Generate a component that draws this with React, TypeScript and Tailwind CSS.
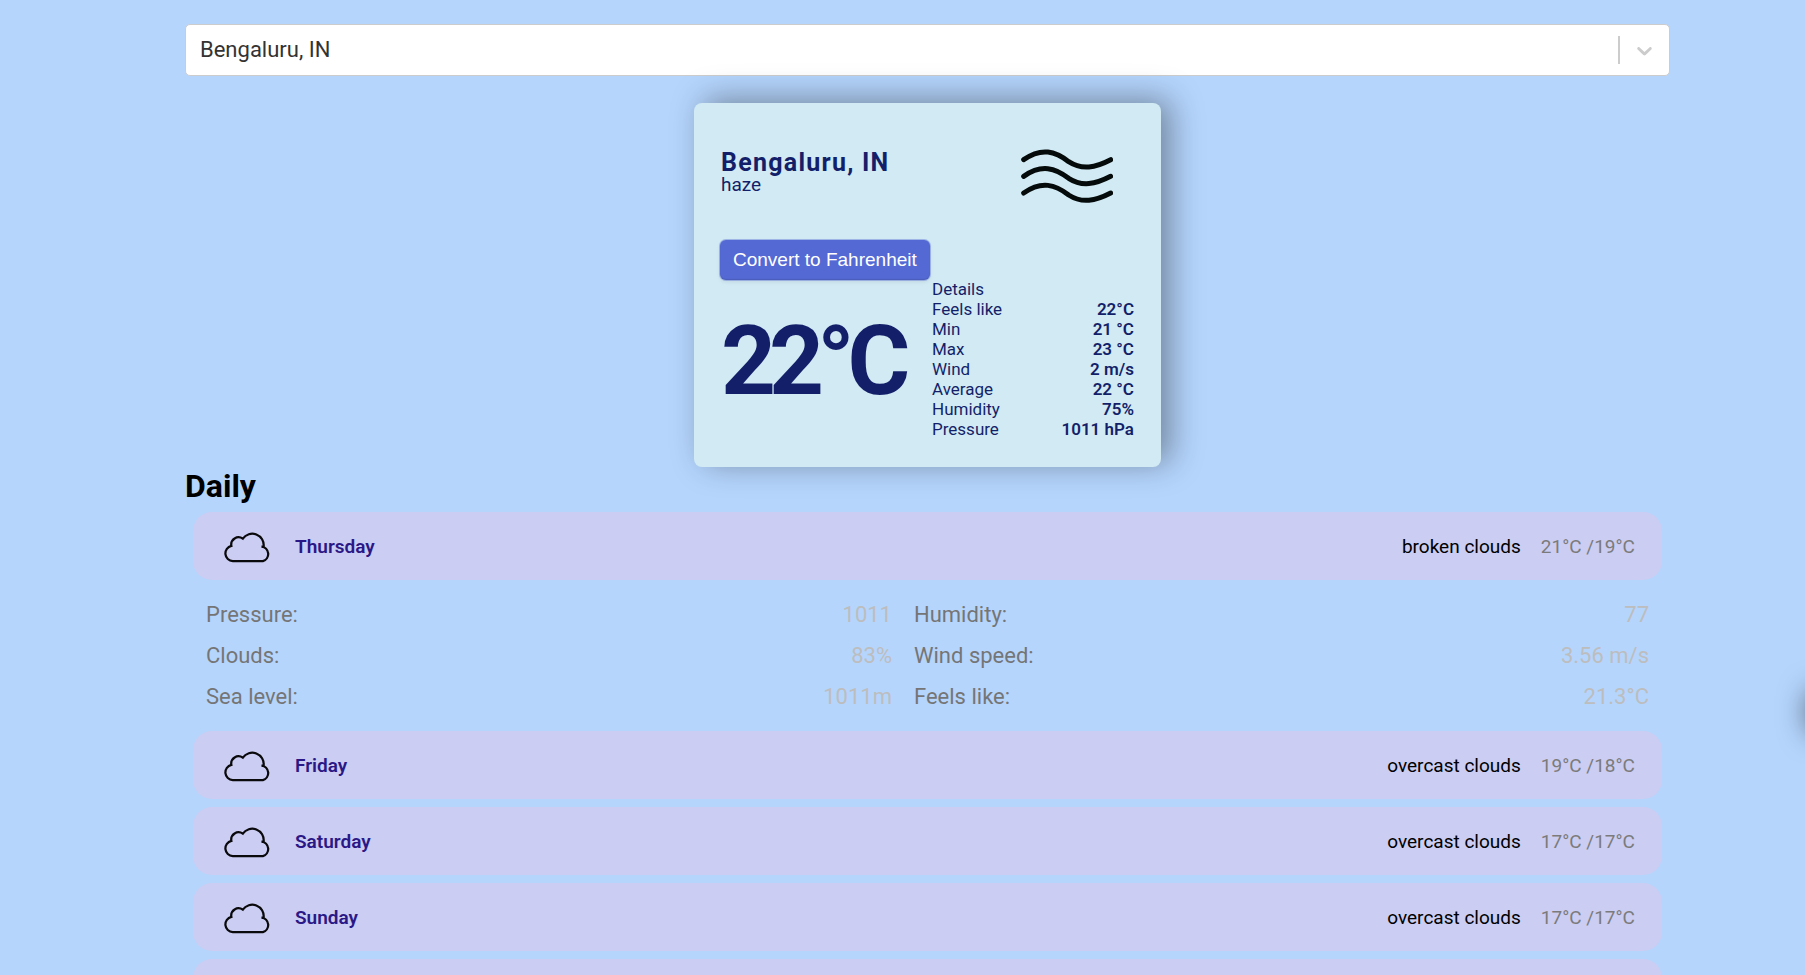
import { useState } from "react";

const DETAILS = [
  ["Feels like", "22°C"],
  ["Min", "21 °C"],
  ["Max", "23 °C"],
  ["Wind", "2 m/s"],
  ["Average", "22 °C"],
  ["Humidity", "75%"],
  ["Pressure", "1011 hPa"],
];

const DAYS = [
  { day: "Thursday", sky: "broken clouds", temp: "21°C /19°C" },
  { day: "Friday", sky: "overcast clouds", temp: "19°C /18°C" },
  { day: "Saturday", sky: "overcast clouds", temp: "17°C /17°C" },
  { day: "Sunday", sky: "overcast clouds", temp: "17°C /17°C" },
  { day: "Monday", sky: "overcast clouds", temp: "17°C /17°C" },
];

const DAY_DETAILS = [
  ["Pressure:", "1011"],
  ["Humidity:", "77"],
  ["Clouds:", "83%"],
  ["Wind speed:", "3.56 m/s"],
  ["Sea level:", "1011m"],
  ["Feels like:", "21.3°C"],
];

function CloudIcon() {
  return (
    <svg className="h-9 w-[50px] shrink-0" viewBox="160 240 144 104" fill="none" stroke="#0a0a0c" strokeWidth="6.5" aria-hidden="true">
      <path d="M188 333H275A21.5 21.5 0 0 0 271 291H277A33 33 0 0 0 217 268A21 21 0 0 0 184 289A22.3 22.3 0 0 0 188 333Z" />
    </svg>
  );
}

function HazeIcon() {
  return (
    <svg className="h-[54px] w-[92px]" viewBox="302 207 276 162" fill="none" stroke="#050b0b" strokeWidth="15" strokeLinecap="round" aria-hidden="true">
      <path d="M310 239C364 201 405 214 445 245C485 271 525 263 571 239" />
      <path d="M310 289C364 251 405 264 445 295C485 321 525 313 571 289" />
      <path d="M310 339C364 301 405 314 445 345C485 371 525 363 571 339" />
    </svg>
  );
}

export default function App() {
  const [open, setOpen] = useState(0);
  return (
    <div className="relative min-h-screen overflow-x-clip bg-[#b5d5fd] pt-6 pr-[135px] pl-[185px] font-[Roboto,sans-serif] text-black">
      <div className="flex h-[52px] items-center rounded-[5px] border border-[#cccccc] bg-white">
        <input
          aria-label="Search for city"
          defaultValue="Bengaluru, IN"
          className="h-full min-w-0 flex-1 bg-transparent px-3.5 pb-0.5 text-[22px] text-[#333333] outline-none"
        />
        <span className="h-7 w-0.5 bg-[#cccccc]" />
        <button aria-label="Show cities" className="flex h-full w-[49px] items-center justify-center text-[#cccccc]">
          <svg className="size-[25px]" viewBox="0 0 20 20" fill="currentColor" aria-hidden="true">
            <path d="M4.516 7.548c0.436-0.446 1.043-0.481 1.576 0l3.908 3.747 3.908-3.747c0.533-0.481 1.141-0.446 1.574 0 0.436 0.445 0.408 1.197 0 1.615-0.406 0.418-4.695 4.502-4.695 4.502-0.217 0.223-0.502 0.335-0.787 0.335s-0.57-0.112-0.789-0.335c0 0-4.287-4.084-4.695-4.502s-0.436-1.17 0-1.615z" />
          </svg>
        </button>
      </div>

      <section className="mx-auto mt-[27px] h-[364px] w-[467px] rounded-lg bg-[#d1eaf4] px-[27px] text-[#141f69] shadow-[10px_-4px_32px_rgba(0,0,0,0.37)]">
        <div className="flex h-[137px] items-start justify-between pt-[46px] pr-[21px]">
          <div className="pt-0.5">
            <h2 className="text-[25px] leading-6 font-bold tracking-wider">Bengaluru, IN</h2>
            <p className="text-[19px] leading-5">haze</p>
          </div>
          <HazeIcon />
        </div>
        <button className="-ml-px flex h-10 items-center rounded-md bg-[#5469d4] px-[13px] font-['Liberation_Sans',sans-serif] text-[19px] text-white shadow-[0_0_0_1px_rgba(84,105,212,0.4),0_2px_4px_rgba(0,0,0,0.08),inset_0_-1px_1px_rgba(0,0,0,0.12)]">
          Convert to Fahrenheit
        </button>
        <div className="flex justify-between">
          <p className="pt-[23px] text-[96px] leading-[116px] font-bold tracking-[-7px]">22°C</p>
          <dl className="-mt-px w-[202px] text-[17px] leading-5">
            <dt>Details</dt>
            {DETAILS.map(([label, value]) => (
              <div key={label} className="flex justify-between">
                <dt>{label}</dt>
                <dd className="font-semibold">{value}</dd>
              </div>
            ))}
          </dl>
        </div>
      </section>

      <h1 className="text-[32px] leading-[39px] font-bold">Daily</h1>
      <div className="mt-1.5 px-2">
        {DAYS.map(({ day, sky, temp }, index) => (
          <div key={day}>
            <button
              onClick={() => setOpen(open === index ? -1 : index)}
              className="mb-2 flex h-[68px] w-full items-center rounded-[19px] bg-[#cbcdf2] pt-0.5 pr-[27px] pl-[30px] text-[19px]"
            >
              <CloudIcon />
              <span className="ml-[22px] flex-1 text-left font-semibold text-[#2b1887]">{day}</span>
              <span>{sky}</span>
              <span className="ml-5 text-[#7b7b7b]">{temp}</span>
            </button>
            {open === index && (
              <dl className="grid grid-cols-[14fr_15fr] gap-x-[22px] px-[13px] pt-1.5 pb-3.5 text-[22px] leading-[41px]">
                {DAY_DETAILS.map(([label, value]) => (
                  <div key={label} className="flex justify-between">
                    <dt className="text-[#757575]">{label}</dt>
                    <dd className="text-[#bdbdbd]">{value}</dd>
                  </div>
                ))}
              </dl>
            )}
          </div>
        ))}
      </div>
      <div className="absolute top-[692px] -right-[84px] h-10 w-20 rounded-lg shadow-[0_0_28px_2px_rgba(0,0,0,0.5)]" />
    </div>
  );
}
